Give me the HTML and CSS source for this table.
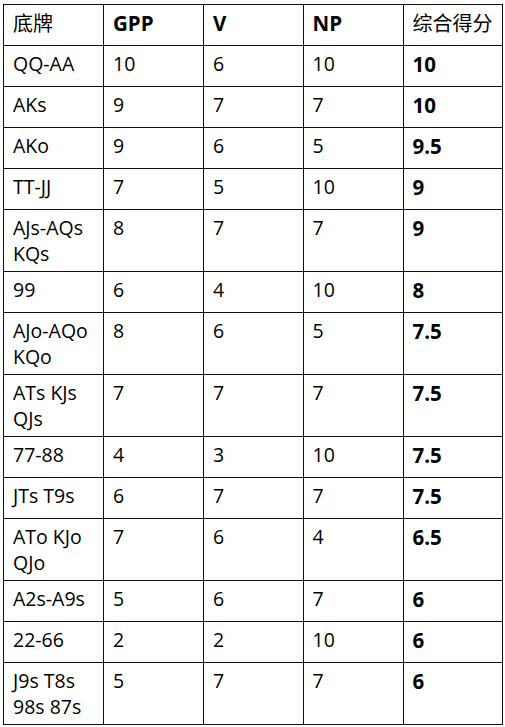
FILE: index.html
```html
<!DOCTYPE html>
<html lang="zh">
<head>
<meta charset="utf-8">
<title>底牌评分表</title>
<link rel="stylesheet" href="styles.css">
</head>
<body>
<table class="score-table">
  <colgroup>
    <col class="c1"><col class="c2"><col class="c3"><col class="c4"><col class="c5">
  </colgroup>
  <thead>
    <tr>
      <th class="cjk">底牌</th>
      <th class="b">GPP</th>
      <th class="b">V</th>
      <th class="b">NP</th>
      <th class="cjk">综合得分</th>
    </tr>
  </thead>
  <tbody>
    <tr><td>QQ-AA</td><td>10</td><td>6</td><td>10</td><td class="b">10</td></tr>
    <tr><td>AKs</td><td>9</td><td>7</td><td>7</td><td class="b">10</td></tr>
    <tr><td>AKo</td><td>9</td><td>6</td><td>5</td><td class="b">9.5</td></tr>
    <tr><td>TT-JJ</td><td>7</td><td>5</td><td>10</td><td class="b">9</td></tr>
    <tr><td>AJs-AQs<br>KQs</td><td>8</td><td>7</td><td>7</td><td class="b">9</td></tr>
    <tr><td>99</td><td>6</td><td>4</td><td>10</td><td class="b">8</td></tr>
    <tr><td>AJo-AQo<br>KQo</td><td>8</td><td>6</td><td>5</td><td class="b">7.5</td></tr>
    <tr><td>ATs KJs<br>QJs</td><td>7</td><td>7</td><td>7</td><td class="b">7.5</td></tr>
    <tr><td>77-88</td><td>4</td><td>3</td><td>10</td><td class="b">7.5</td></tr>
    <tr><td>JTs T9s</td><td>6</td><td>7</td><td>7</td><td class="b">7.5</td></tr>
    <tr><td>ATo KJo<br>QJo</td><td>7</td><td>6</td><td>4</td><td class="b">6.5</td></tr>
    <tr><td>A2s-A9s</td><td>5</td><td>6</td><td>7</td><td class="b">6</td></tr>
    <tr><td>22-66</td><td>2</td><td>2</td><td>10</td><td class="b">6</td></tr>
    <tr><td>J9s T8s<br>98s 87s</td><td>5</td><td>7</td><td>7</td><td class="b">6</td></tr>
  </tbody>
</table>
</body>
</html>
```
FILE: styles.css
```css
html, body {
  margin: 0;
  padding: 0;
  background: #ffffff;
}
body {
  padding: 4px 0 0 3px;
  font-family: "Open Sans", "Noto Sans CJK SC", sans-serif;
  color: #000000;
}
.score-table {
  border-collapse: collapse;
  table-layout: fixed;
  width: 499px;
  font-size: 19.5px;
  line-height: 26px;
}
.c1, .c2, .c4 { width: 100px; }
.c3, .c5 { width: 99.5px; }
.score-table tr {
  height: 41px;
}
.score-table th,
.score-table td {
  border: 1px solid #111111;
  padding: 5px 4px 4px 9px;
  text-align: left;
  vertical-align: top;
  font-weight: 400;
  white-space: nowrap;
}
.score-table .b {
  font-weight: 700;
  font-size: 20.5px;
}
.score-table .cjk {
  font-family: "Noto Sans CJK SC", "Open Sans", sans-serif;
  font-weight: 400;
  font-size: 20px;
}
```
